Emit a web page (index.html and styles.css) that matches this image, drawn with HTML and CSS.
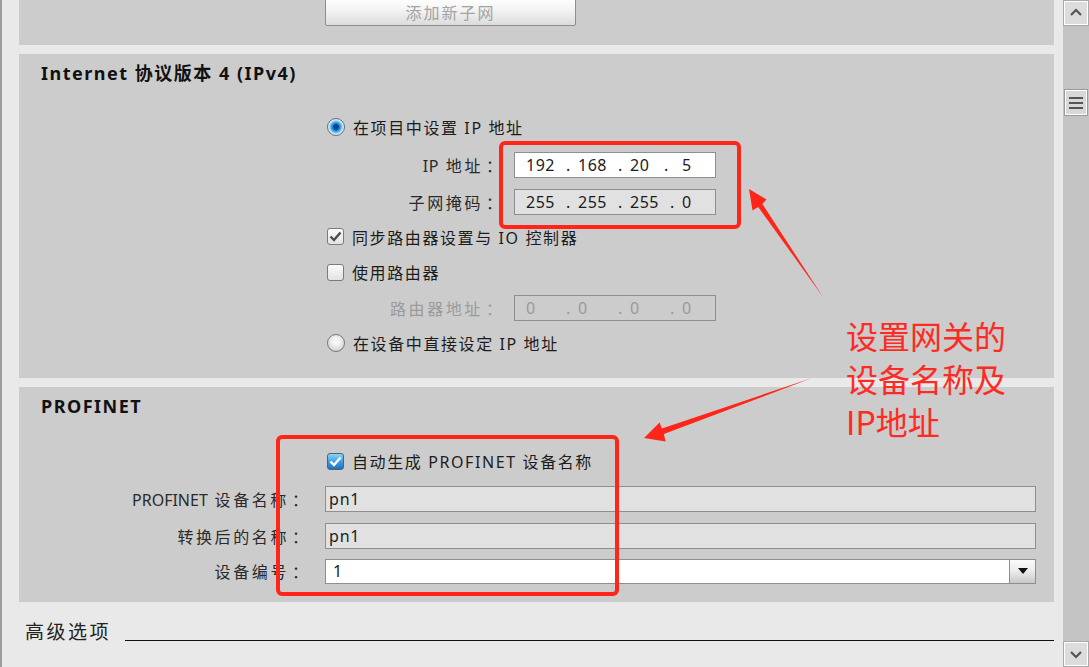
FILE: index.html
```html
<!DOCTYPE html>
<html lang="zh-CN">
<head>
<meta charset="utf-8">
<title>PROFINET 接口属性</title>
<link rel="stylesheet" href="styles.css">
</head>
<body>
<div class="screen">
  <div class="content">
    <section class="panel panel-top">
      <button class="btn-sub" type="button">添加新子网</button>
    </section>

    <section class="panel panel-ipv4">
      <h2 class="panel-title">Internet 协议版本 4 (IPv4)</h2>
      <div class="ip-form">
        <div class="opt"><span class="radio on"></span><span>在项目中设置 IP 地址</span></div>
        <div class="lbl"><span class="latin">IP</span> 地址<span class="colon">：</span></div>
        <div class="ipbox white">
          <span class="seg">192</span><span class="dot">.</span><span class="seg">168</span><span class="dot">.</span><span class="seg">20</span><span class="dot dot-early">.</span><span class="seg">5</span>
        </div>
        <div class="lbl">子网掩码<span class="colon">：</span></div>
        <div class="ipbox ro">
          <span class="seg">255</span><span class="dot">.</span><span class="seg">255</span><span class="dot">.</span><span class="seg">255</span><span class="dot">.</span><span class="seg">0</span>
        </div>
        <div class="opt"><span class="check on"><svg viewBox="0 0 17 17" width="17" height="17"><path d="M3.5 8.5 L7 12 L13.5 4.5" fill="none" stroke="#4d4d4d" stroke-width="2.4"/></svg></span><span>同步路由器设置与 IO 控制器</span></div>
        <div class="opt"><span class="check"></span><span>使用路由器</span></div>
        <div class="lbl dis">路由器地址<span class="colon">：</span></div>
        <div class="ipbox dis">
          <span class="seg">0</span><span class="dot">.</span><span class="seg">0</span><span class="dot">.</span><span class="seg">0</span><span class="dot">.</span><span class="seg">0</span>
        </div>
        <div class="opt"><span class="radio"></span><span>在设备中直接设定 IP 地址</span></div>
      </div>
    </section>

    <section class="panel panel-pn">
      <h2 class="panel-title">PROFINET</h2>
      <div class="pn-form">
        <div class="opt opt-pn"><span class="check blue"><svg viewBox="0 0 17 17" width="17" height="17"><path d="M3.5 8.5 L7 12 L13.5 4.5" fill="none" stroke="#ffffff" stroke-width="2.4"/></svg></span><span>自动生成 PROFINET 设备名称</span></div>
        <div class="lbl"><span class="latin tight">PROFINET</span> 设备名称<span class="colon">：</span></div>
        <div class="tfield ro">pn1</div>
        <div class="lbl">转换后的名称<span class="colon">：</span></div>
        <div class="tfield ro">pn1</div>
        <div class="lbl">设备编号<span class="colon">：</span></div>
        <div class="combo">
          <div class="combo-text">1</div>
          <div class="combo-btn"><span class="tri"></span></div>
        </div>
      </div>
    </section>

    <div class="advanced">
      <span class="adv-text">高级选项</span>
      <span class="rule"></span>
    </div>
  </div>

  <div class="scrollbar">
    <div class="sb-btn">
      <svg viewBox="0 0 22 22" width="22" height="22"><path d="M6 13 L11 8 L16 13" fill="none" stroke="#555" stroke-width="2.2"/></svg>
    </div>
    <div class="sb-gap"></div>
    <div class="sb-thumb"><i></i><i></i><i></i></div>
    <div class="sb-fill"></div>
    <div class="sb-btn">
      <svg viewBox="0 0 22 22" width="22" height="22"><path d="M6 9 L11 14 L16 9" fill="none" stroke="#555" stroke-width="2.2"/></svg>
    </div>
  </div>

  <svg class="annot" viewBox="0 0 1089 667" width="1089" height="667">
    <rect x="501" y="143" width="238" height="84" rx="4" fill="none" stroke="#ff2619" stroke-width="4"/>
    <rect x="278" y="437" width="339" height="157" rx="4" fill="none" stroke="#ff2619" stroke-width="4"/>
    <polygon points="823,297 762.4,204.1 766.5,199.5 749,189 752.5,210.5 758.2,206.9" fill="#ff2619"/>
    <polygon points="812,378 663.9,434.1 665.5,441.5 644,438 659.5,422.5 661.9,428.5" fill="#ff2619"/>
  </svg>
  <div class="note">设置网关的<br>设备名称及<br>IP地址</div>
</div>
</body>
</html>
```

FILE: styles.css
```css
html, body {
  margin: 0;
  padding: 0;
}

body {
  font-family: "Noto Sans", "Noto Sans CJK SC", sans-serif;
  font-size: 16px;
  color: #1c1c1c;
}

.screen {
  width: 1089px;
  height: 667px;
  position: relative;
  overflow: hidden;
  display: flex;
  background: #e9e9e9;
}

.content {
  width: 1035px;
  border-left: 2px solid #9c9c9c;
  padding-left: 17px;
  padding-right: 9px;
  flex: none;
}

.panel {
  background: #cccccc;
  box-sizing: border-box;
}

.panel-top {
  height: 45px;
  margin-bottom: 9px;
  padding-left: 306px;
  display: flex;
  align-items: flex-start;
}

.btn-sub {
  display: block;
  width: 251px;
  height: 29px;
  margin-top: -3px;
  padding: 0;
  border: 1px solid #8e8e8e;
  border-radius: 2px;
  background: linear-gradient(#ffffff, #f3f3f3 45%, #dcdcdc);
  font-family: "Noto Sans CJK SC", sans-serif;
  font-size: 16px;
  letter-spacing: 2px;
  color: #a3a3a3;
}

.panel-ipv4 {
  height: 324px;
  margin-bottom: 9px;
}

.panel-pn {
  height: 215px;
}

.panel-title {
  margin: 0;
  height: 38px;
  line-height: 38px;
  padding-left: 22px;
  font-size: 18px;
  font-weight: bold;
  color: #111;
  letter-spacing: 1.5px;
}

.ip-form {
  display: grid;
  grid-template-columns: 178px 202px;
  grid-template-rows: 38px 38px 35px 35px 36px 36px 34px;
  column-gap: 9px;
  margin: 16px 0 0 308px;
  align-items: center;
}

.opt {
  grid-column: 1 / -1;
  display: flex;
  align-items: center;
  gap: 8px;
  letter-spacing: 1.6px;
  white-space: nowrap;
}

.lbl {
  text-align: right;
  letter-spacing: 2.6px;
  color: #2a2a2a;
  white-space: nowrap;
  margin-right: 3px;
}

.latin {
  letter-spacing: 0.6px;
}

.latin.tight {
  letter-spacing: 0;
}

.colon {
  font-family: "Noto Sans CJK JP", sans-serif;
  letter-spacing: 0;
  padding-left: 3px;
}

.lbl.dis {
  color: #9a9a9a;
}

.radio {
  width: 18px;
  height: 18px;
  border-radius: 50%;
  box-sizing: border-box;
  border: 1px solid #777;
  background: radial-gradient(circle at 50% 40%, #ffffff 0, #efefef 35%, #c4c4c4 100%);
  flex: none;
}

.radio.on {
  border-color: #6b6b6b;
  background: radial-gradient(circle at 50% 50%, #0a3c73 0, #0d4d8e 2.6px, #1f8ad8 3.6px, #49aeea 5px, #a7dcf7 6.4px, #e2f3fc 8px);
}

.check {
  width: 17px;
  height: 17px;
  box-sizing: border-box;
  border: 1px solid #7b7b7b;
  border-radius: 3px;
  background: linear-gradient(#fbfbfb, #e2e2e2);
  flex: none;
  display: flex;
  align-items: center;
  justify-content: center;
}

.check svg {
  display: block;
  margin: -1px;
}

.check.blue {
  border-color: #4f6272;
  background: linear-gradient(#8fd2f7, #3a9be0 55%, #1b72c4);
}

.ipbox {
  height: 26px;
  box-sizing: border-box;
  border: 1px solid #8e8e8e;
  display: flex;
  align-items: center;
  padding-left: 11px;
  font-size: 16px;
  letter-spacing: 0.5px;
}

.ipbox.white {
  background: #ffffff;
}

.ipbox.ro {
  background: #e1e1e1;
}

.ipbox.dis {
  background: transparent;
  color: #9a9a9a;
}

.seg {
  width: 40px;
  flex: none;
}

.dot {
  width: 12px;
  flex: none;
}

.dot-early {
  margin-left: -6px;
  margin-right: 6px;
}

.pn-form {
  display: grid;
  grid-template-columns: 292px 711px;
  grid-template-rows: 38px 38px 35px 36px;
  column-gap: 14px;
  margin-top: 17px;
  align-items: center;
}

.opt-pn {
  grid-column: 2;
  padding-left: 2px;
}

.tfield {
  height: 26px;
  box-sizing: border-box;
  border: 1px solid #8e8e8e;
  padding-left: 3px;
  display: flex;
  align-items: center;
  font-size: 16px;
  letter-spacing: 0.8px;
}

.tfield.ro {
  background: #e1e1e1;
}

.combo {
  height: 25px;
  box-sizing: border-box;
  border: 1px solid #8e8e8e;
  background: #ffffff;
  display: flex;
}

.combo-text {
  flex: 1;
  padding-left: 7px;
  display: flex;
  align-items: center;
}

.combo-btn {
  width: 25px;
  border-left: 1px solid #8e8e8e;
  background: linear-gradient(#fafafa, #ededed 45%, #c9c9c9);
  display: flex;
  align-items: center;
  justify-content: center;
}

.tri {
  width: 0;
  height: 0;
  border-left: 5px solid transparent;
  border-right: 5px solid transparent;
  border-top: 6px solid #111;
}

.advanced {
  height: 24px;
  padding: 17px 0 0 6px;
  display: flex;
  align-items: flex-end;
}

.adv-text {
  font-family: "Noto Sans CJK SC", sans-serif;
  font-size: 19px;
  line-height: 24px;
  letter-spacing: 2.5px;
  color: #222;
  white-space: nowrap;
}

.rule {
  flex: 1;
  margin-left: 14px;
  margin-bottom: 2px;
  border-top: 1px solid #111;
}

.scrollbar {
  width: 26px;
  flex: none;
  background: #c3c3c3;
  display: flex;
  flex-direction: column;
}

.sb-btn {
  height: 26px;
  box-sizing: border-box;
  border: 2px solid #ffffff;
  outline: 1px solid #a9a9a9;
  outline-offset: -1px;
  background: #dcdcdc;
  display: flex;
  align-items: center;
  justify-content: center;
  flex: none;
}

.sb-gap {
  height: 63px;
  flex: none;
}

.sb-thumb {
  height: 27px;
  margin: 0 1px;
  box-sizing: border-box;
  border: 2px solid #ffffff;
  outline: 1px solid #9a9a9a;
  outline-offset: -1px;
  background: #d8d8d8;
  display: flex;
  flex-direction: column;
  align-items: center;
  justify-content: center;
  gap: 3px;
  flex: none;
}

.sb-thumb i {
  display: block;
  width: 14px;
  height: 2px;
  background: #555;
}

.sb-fill {
  flex: 1;
}

.annot {
  position: absolute;
  left: 0;
  top: 0;
  pointer-events: none;
}

.note {
  position: absolute;
  left: 846px;
  top: 314px;
  font-family: "Noto Sans CJK SC", sans-serif;
  font-size: 32px;
  line-height: 43px;
  color: #ff2a22;
  white-space: nowrap;
}
```
